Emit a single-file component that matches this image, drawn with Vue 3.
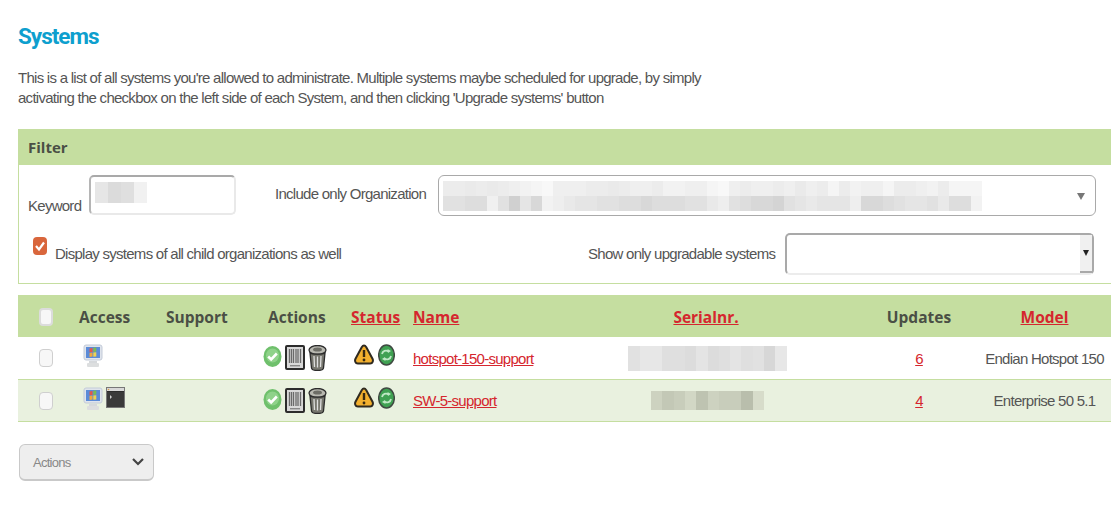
<template>
  <div class="page">
    <svg class="defs" width="0" height="0" aria-hidden="true">
      <symbol id="i-monitor" viewBox="0 0 20 24">
        <rect x="1" y="1" width="18" height="15" rx="2" fill="#dfe4ec" stroke="#c3cbd8" />
        <rect x="3" y="3" width="14" height="11" fill="#5b8bd8" />
        <path d="M6.500 4.500l3-.6v4l-3 .4z" fill="#e4574a" />
        <path d="M10.300 3.800l3-.4v4.200l-3 .3z" fill="#7cbb52" />
        <path d="M6.500 9l3-.4v4l-3 .4z" fill="#f0a83e" />
        <path d="M10.300 8.500l3-.3v4.300l-3 .2z" fill="#f0d24e" />
        <rect x="6" y="17" width="8" height="2" fill="#d6d9dc" />
        <rect x="4" y="19" width="12" height="4" rx="1" fill="#dcdedf" />
      </symbol>
      <symbol id="i-terminal" viewBox="0 0 19 21">
        <rect x=".5" y=".5" width="18" height="20" fill="#2c2c2c" stroke="#777" />
        <rect x="1" y="1" width="17" height="3" fill="#d8d8d8" />
        <circle cx="2.500" cy="2.500" r=".8" fill="#d9a04a" />
        <rect x="1" y="5" width="17" height="15" fill="#fff" opacity=".07" />
        <path d="M4 8l2 2-2 2z" fill="#cfcfcf" />
      </symbol>
      <symbol id="i-ok" viewBox="0 0 19 23">
        <ellipse cx="9.500" cy="11.500" rx="9" ry="10.500" fill="#6fc06c" />
        <ellipse cx="9.500" cy="10.500" rx="6.500" ry="7" fill="#8fd28a" />
        <path d="M5.200 11.500l3 3 5.600-6" fill="none" stroke="#fff" stroke-width="2.600" />
      </symbol>
      <symbol id="i-barcode" viewBox="0 0 20 25">
        <rect x="1" y="1" width="18" height="23" rx="1" fill="#d8d8d8" stroke="#2c2c2c" stroke-width="2" />
        <path d="M4.500 4v14M6.500 4v14M8.500 4v14M11 4v14M13 4v14M15.500 4v14" stroke="#6a6a6a" stroke-width="1.300" />
        <rect x="5" y="20" width="10" height="1.400" fill="#888" />
      </symbol>
      <symbol id="i-trash" viewBox="0 0 19 26">
        <ellipse cx="9.500" cy="5" rx="8.500" ry="4.500" fill="#b8b8b0" stroke="#2c2c2c" stroke-width="1.300" />
        <ellipse cx="9.500" cy="4.500" rx="4.500" ry="2" fill="#6d6d66" />
        <path d="M2 8l1.500 15c.2 1.500 2.500 2.500 6 2.500s5.800-1 6-2.500L17 8c-2 1.500-13 1.500-15 0z" fill="#77776f" stroke="#2c2c2c" stroke-width="1.300" />
        <path d="M6 11l.5 11M9.500 11.500v11M13 11l-.5 11" stroke="#dedede" stroke-width="1.300" />
      </symbol>
      <symbol id="i-warn" viewBox="0 0 20 21">
        <path d="M10 1.500c1 0 1.700.8 2.300 1.800l6.200 11.500c1 2 .2 4.700-2.300 4.700H3.800c-2.500 0-3.300-2.700-2.300-4.700L7.700 3.300C8.300 2.300 9 1.500 10 1.500z" fill="#f3b02e" stroke="#2f2a20" stroke-width="2" />
        <path d="M10 6v7" stroke="#3a2a10" stroke-width="2.400" />
        <circle cx="10" cy="16" r="1.400" fill="#3a2a10" />
      </symbol>
      <symbol id="i-refresh" viewBox="0 0 17 22">
        <ellipse cx="8.500" cy="11" rx="7.800" ry="10" fill="#3fa152" stroke="#3f4a42" stroke-width="1.500" />
        <path d="M4 10c.5-3 4-4.500 6.500-2.500M13 12c-.5 3-4 4.500-6.500 2.500" fill="none" stroke="#bfe8c5" stroke-width="1.800" />
        <path d="M9.500 5l3.500 2-3 2zM7.500 17l-3.500-2 3-2z" fill="#bfe8c5" />
      </symbol>
    </svg>

    <h1 class="title">Systems</h1>
    <p class="intro">
      This is a list of all systems you're allowed to administrate. Multiple systems maybe scheduled for upgrade, by simply<br />
      activating the checkbox on the left side of each System, and then clicking 'Upgrade systems' button
    </p>

    <section class="filter">
      <h2 class="filter__head">Filter</h2>
      <div class="filter__row filter__row--top">
        <label class="keyword-label">Keyword</label>
        <div class="keyword">
          <div class="mosaic">
            <div v-for="(row, r) in keywordCells" :key="r" class="mosaic__row">
              <span v-for="(c, i) in row" :key="i" class="cell cell--keyword" :style="{ background: c }" />
            </div>
          </div>
        </div>
        <label class="org-label">Include only Organization</label>
        <div class="org-select">
          <div class="mosaic">
            <div v-for="(row, r) in orgCells" :key="r" class="mosaic__row">
              <span v-for="(c, i) in row" :key="i" class="cell cell--org" :style="{ background: c }" />
            </div>
          </div>
          <span class="org-arrow" />
        </div>
      </div>
      <div class="filter__row filter__row--bottom">
        <span class="check check--on">
          <svg viewBox="0 0 14 18" width="14" height="18"><path d="M3 9l3 3.500 5-7" fill="none" stroke="#fff" stroke-width="2.200" /></svg>
        </span>
        <span class="child-label">Display systems of all child organizations as well</span>
        <label class="upgrade-label">Show only upgradable systems</label>
        <div class="upgrade-select">
          <span class="upgrade-select__btn"><i /></span>
        </div>
      </div>
    </section>

    <table class="systems">
      <colgroup>
        <col v-for="w in columnWidths" :key="w.key" :style="{ width: w.width + 'px' }" />
      </colgroup>
      <thead>
        <tr>
          <th class="center"><span class="check check--head" /></th>
          <th>Access</th>
          <th>Support</th>
          <th>Actions</th>
          <th><a>Status</a></th>
          <th><a>Name</a></th>
          <th class="center"><a>Serialnr.</a></th>
          <th class="center">Updates</th>
          <th class="center model"><a>Model</a></th>
        </tr>
      </thead>
      <tbody>
        <tr v-for="item in systems" :key="item.name">
          <td class="center"><span class="check" /></td>
          <td>
            <div class="icons icons--access">
              <svg width="20" height="24"><use href="#i-monitor" /></svg>
              <svg v-if="item.terminal" width="19" height="21"><use href="#i-terminal" /></svg>
            </div>
          </td>
          <td />
          <td>
            <div class="icons icons--actions">
              <svg width="19" height="23"><use href="#i-ok" /></svg>
              <svg width="20" height="25"><use href="#i-barcode" /></svg>
              <svg width="19" height="26"><use href="#i-trash" /></svg>
            </div>
          </td>
          <td>
            <div class="icons icons--status">
              <svg width="20" height="21"><use href="#i-warn" /></svg>
              <svg width="17" height="22"><use href="#i-refresh" /></svg>
            </div>
          </td>
          <td><a>{{ item.name }}</a></td>
          <td class="serial">
            <div class="mosaic mosaic--serial">
              <div class="mosaic__row">
                <span
                  v-for="(c, i) in item.serial"
                  :key="i"
                  class="cell cell--serial"
                  :style="{ background: c, height: item.serialHeight + 'px' }"
                />
              </div>
            </div>
          </td>
          <td class="center"><a>{{ item.updates }}</a></td>
          <td class="center model">{{ item.model }}</td>
        </tr>
      </tbody>
    </table>

    <div class="bulk">
      <span>Actions</span>
      <svg width="14" height="10" viewBox="0 0 14 10"><path d="M2 2l5 5 5-5" fill="none" stroke="#444" stroke-width="2.200" /></svg>
    </div>
  </div>
</template>

<script setup>
// digits 0-9 map onto a grey ramp for the pixelated (redacted) values
function shades(text, from, to) {
  return [...text].map((d) => {
    const v = Math.round(from + ((to - from) * Number(d)) / 9)
    return `rgb(${v},${v},${v})`
  })
}

function greens(text) {
  return [...text].map((d) => {
    const k = Number(d) * 5
    return `rgb(${185 + k},${190 + k},${172 + k})`
  })
}

const keywordCells = [shades('5238', 212, 245)]

const orgCells = [
  shades('5545456789666554566577668965665646585766855675888', 222, 248),
  shades('4433440528765544332333446743221456555722345546338', 208, 246).map((c, i) => (i === 4 ? 'rgb(240,240,240)' : c))
]

const columnWidths = [52, 87, 102, 83, 62, 154, 296, 130, 127].map((width, key) => ({ key, width }))

const systems = [
  {
    name: 'hotspot-150-support',
    terminal: false,
    serial: shades('57744363464517', 212, 236),
    serialHeight: 25,
    updates: 6,
    model: 'Endian Hotspot 150'
  },
  {
    name: 'SW-5-support',
    terminal: true,
    serial: greens('4235143306'),
    serialHeight: 19,
    updates: 4,
    model: 'Enterprise 50 5.1'
  }
]
</script>

<style>
html,
body {
  margin: 0;
  background: #fff;
  overflow: hidden;
}
</style>

<style scoped>
.page {
  width: 1111px;
  height: 513px;
  overflow: hidden;
  box-sizing: border-box;
  padding: 22px 0 0 18px;
  font-family: "Liberation Sans", Arial, sans-serif;
  font-size: 15px;
  letter-spacing: -0.73px;
  color: #555;
}

.defs {
  position: absolute;
}

.title {
  margin: 0;
  font-family: Roboto, "Liberation Sans", sans-serif;
  font-size: 22.500px;
  line-height: 28px;
  font-weight: 700;
  letter-spacing: -1px;
  color: #0e9fce;
}

.intro {
  margin: 18px 0 0;
  line-height: 20px;
  color: #555;
}

.filter {
  width: 1120px;
  margin-top: 21px;
  box-sizing: border-box;
  height: 155px;
  border: 1px solid #c5dea0;
}

.filter__head {
  margin: 0;
  height: 35px;
  padding-left: 9px;
  background: #c5dea0;
  font-family: "Open Sans", sans-serif;
  font-size: 15px;
  line-height: 35px;
  font-weight: 700;
  letter-spacing: 0;
  color: #4a4f45;
}

.filter__row {
  display: flex;
}

.filter__row--top {
  align-items: flex-start;
  padding: 10px 0 0 9px;
}

.keyword-label {
  margin-top: 21px;
  width: 61px;
  line-height: 20px;
}

.keyword {
  width: 147px;
  height: 40px;
  box-sizing: border-box;
  padding: 5px 0 0 4px;
  border: 2px solid #e9e9e9;
  border-top-color: #a9a9a9;
  border-left-color: #b5b5b5;
  border-radius: 5px;
}

.mosaic {
  filter: blur(0.6px);
}

.mosaic__row {
  display: flex;
}

.cell {
  display: block;
  flex: none;
}

.cell--keyword {
  width: 13px;
  height: 21px;
}

.cell--org {
  width: 11px;
  height: 15px;
}

.cell--serial {
  width: 11.300px;
}

.org-label {
  margin: 9px 0 0 39px;
  width: 163px;
  line-height: 20px;
}

.org-select {
  position: relative;
  width: 658px;
  height: 41px;
  box-sizing: border-box;
  padding: 5px 0 0 4px;
  border: 1px solid #a9a9a9;
  border-radius: 6px;
}

.org-arrow {
  position: absolute;
  right: 10px;
  top: 17px;
  border: 4.500px solid transparent;
  border-top: 7px solid #777;
  border-bottom: 0;
}

.filter__row--bottom {
  align-items: center;
  height: 42px;
  margin-top: 17px;
  padding-left: 14px;
}

.check {
  display: block;
  flex: none;
  width: 14px;
  height: 18px;
  box-sizing: border-box;
  border: 1px solid #cfcfcf;
  border-radius: 4px;
  background: #f7f7f7;
}

.check--on {
  position: relative;
  top: -8px;
  border: 0;
  background: #d9663c;
}

.check--on svg {
  display: block;
}

.check--head {
  border: 2px solid #dcdcdc;
}

.child-label {
  margin-left: 8px;
  width: 533px;
  line-height: 20px;
}

.upgrade-label {
  width: 197px;
  line-height: 20px;
}

.upgrade-select {
  display: flex;
  justify-content: flex-end;
  width: 309px;
  height: 42px;
  box-sizing: border-box;
  border: 2px solid #a9a9a9;
  border-bottom-color: #ececec;
  border-radius: 5px;
}

.upgrade-select__btn {
  display: flex;
  align-items: center;
  justify-content: center;
  width: 12px;
  background: #f0f0f0;
  border-bottom: 2px solid #a9a9a9;
}

.upgrade-select__btn i {
  border: 3.500px solid transparent;
  border-top: 6px solid #222;
  border-bottom: 0;
}

.systems {
  width: 1093px;
  margin-top: 11px;
  table-layout: fixed;
  border-collapse: collapse;
  color: #555;
}

.systems th {
  height: 42px;
  padding: 1px 0 0 9px;
  box-sizing: border-box;
  background: #c5dea0;
  font-family: "Open Sans", sans-serif;
  font-size: 15.500px;
  font-weight: 700;
  letter-spacing: 0;
  text-align: left;
  color: #4a4f45;
}

.systems td {
  height: 41px;
  padding: 0 0 0 9px;
  border-bottom: 1px solid #c5dea0;
}

.systems tbody tr:nth-child(even) td {
  background: #e9f1df;
}

.systems tbody tr:first-child td {
  height: 42px;
}

.systems .center {
  padding-left: 0;
  text-align: center;
}

.systems .model {
  padding-right: 6px;
}

.systems .serial {
  padding-right: 6px;
}

.systems .center .check {
  margin: 0 0 0 21px;
}

.systems a {
  color: #d5262e;
  text-decoration: underline;
}

.icons {
  display: flex;
  align-items: flex-start;
  gap: 2px;
}

.icons svg {
  display: block;
  flex: none;
  filter: blur(0.3px);
}

.icons--access {
  position: relative;
  top: -2px;
  margin-left: 4px;
  gap: 3px;
}

.icons--actions {
  margin-left: -5px;
  gap: 3px;
}

.icons--status {
  position: relative;
  top: -3px;
  margin-left: 3px;
  gap: 4px;
}

.mosaic--serial .mosaic__row {
  justify-content: center;
}

.bulk {
  display: flex;
  align-items: center;
  justify-content: space-between;
  width: 135px;
  height: 37px;
  box-sizing: border-box;
  margin: 22px 0 0 1px;
  padding: 0 8px 0 13px;
  border: 1px solid #c9c9c9;
  border-bottom-width: 2px;
  border-radius: 6px;
  background: #eee;
  font-size: 13px;
  color: #888;
}
</style>
